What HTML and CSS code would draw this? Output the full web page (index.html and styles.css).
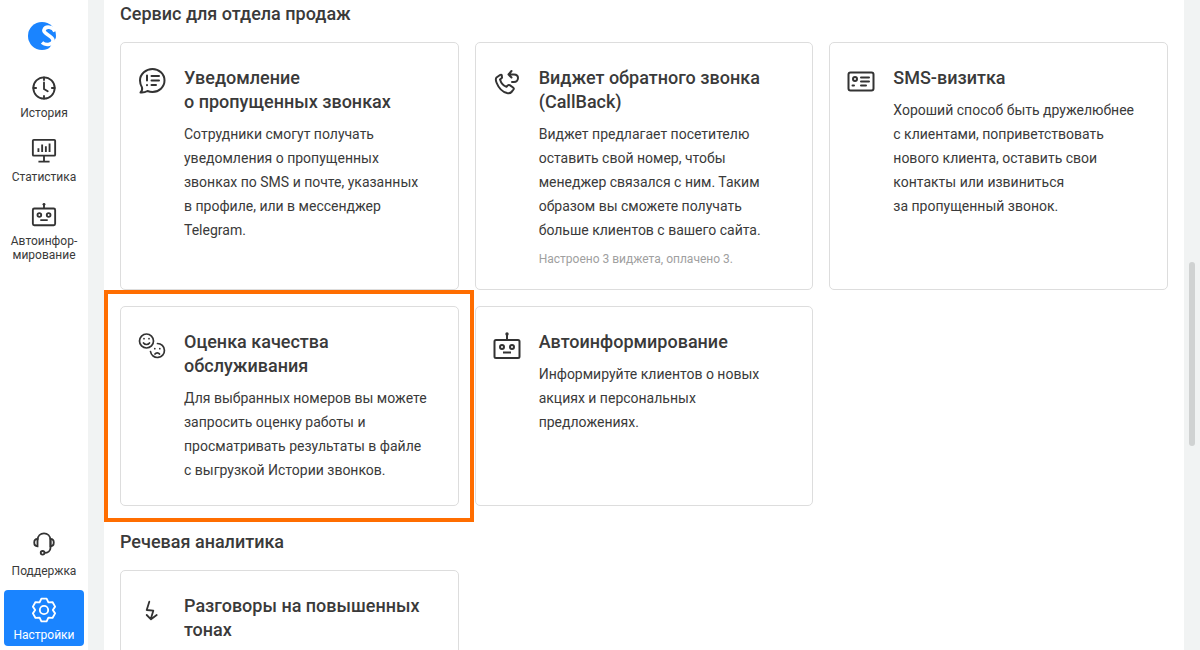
FILE: index.html
```html
<!DOCTYPE html>
<html lang="ru">
<head>
<meta charset="utf-8">
<title>Сервисы</title>
<link rel="stylesheet" href="styles.css">
</head>
<body>
<div class="app">
  <nav class="sidebar">
    <div class="nav-top">
      <svg class="logo" viewBox="0 0 28 28"><circle cx="14" cy="14" r="14" fill="#1a84ff"/><path d="M27 9.500C25 4.500 17.500 3.500 16 8c-1.200 4 8 5 9 10 .7 4.500-7 6-11 2.500" fill="none" stroke="#fff" stroke-width="3.600"/><path d="M28 16v12h-8z" fill="#fff"/></svg>
      <a class="nav-item nav-hist">
        <svg class="nav-icon" viewBox="0 0 28 28" fill="none" stroke="#333" stroke-width="2"><circle cx="14" cy="14" r="11.500"/><path d="M14 2.500v3M14 22.500v3M2.500 14h3M22.500 14h3M14 8v7l4 2.500" stroke-linecap="round"/></svg>
        <span>История</span>
      </a>
      <a class="nav-item nav-stat">
        <svg class="nav-icon" viewBox="0 0 28 28" fill="none" stroke="#333" stroke-width="2"><rect x="2" y="2" width="24" height="17" rx="1"/><path d="M14 19v6M8 25.500h12M8 15v-4M12 15V7M16 15v-6M20 15V6"/></svg>
        <span>Статистика</span>
      </a>
      <a class="nav-item nav-robot">
        <svg class="nav-icon" viewBox="0 0 28 28" fill="none" stroke="#333" stroke-width="2"><rect x="2" y="7" width="24" height="18" rx="1.500"/><path d="M14 7V3M10 19.500h8"/><circle cx="14" cy="2.500" r="1.500" fill="#333" stroke="none"/><circle cx="9" cy="14" r="2"/><circle cx="19" cy="14" r="2"/></svg>
        <span>Автоинфор-<br>мирование</span>
      </a>
    </div>
    <div class="nav-bottom">
      <a class="nav-item nav-support">
        <svg class="nav-icon" viewBox="0 0 28 28" fill="none" stroke="#333" stroke-width="2"><path d="M7 10c0-10 14-10 14 0v8c0 3.500-3 5.500-6.500 5.500"/><path d="M7 8.500C4.500 8.500 3.500 10 3.500 12.500s1 4 3.500 4zM21 8.500c2.500 0 3.500 1.500 3.500 4s-1 4-3.500 4z"/><circle cx="12.500" cy="23.500" r="2"/></svg>
        <span>Поддержка</span>
      </a>
      <a class="nav-item nav-active">
        <svg class="nav-icon" viewBox="0 0 28 28" fill="none" stroke="#fff" stroke-width="2" stroke-linejoin="round"><path d="M11.190 1.820h5.620l1.940 3.950 4.390-.29 2.810 4.870-2.450 3.650 2.450 3.650-2.810 4.870-4.390-.29-1.940 3.950h-5.620l-1.940-3.950-4.390.29-2.810-4.870L4.500 14 2.050 10.350l2.810-4.870 4.390.29z"/><circle cx="14" cy="14" r="4.500"/></svg>
        <span>Настройки</span>
      </a>
    </div>
  </nav>
  <main class="main">
    <h2 class="section-title">Сервис для отдела продаж</h2>
    <div class="grid">
      <article class="card card-tall">
        <svg class="card-icon" viewBox="0 0 28 28" fill="none" stroke="#333" stroke-width="2" stroke-linecap="round" stroke-linejoin="round"><path d="M14.500 2C21 2 26.500 7 26.500 13.500S21 25 14.500 25c-2 0-3.500-.4-5-1-2 1.200-4 1.800-7 1.500 1.500-1.500 2-3 1.500-5C2.800 18.500 2 16 2 13.500 2 7 8 2 14.500 2z"/><path d="M9 8.500v5M9 18v.2M13.500 9H21M13.500 13.500H21M13.500 18H18"/></svg>
        <div class="card-body">
          <h3 class="card-title">Уведомление<br>о пропущенных звонках</h3>
          <p class="card-text">Сотрудники смогут получать<br>уведомления о пропущенных<br>звонках по SMS и почте, указанных<br>в профиле, или в мессенджер<br>Telegram.</p>
        </div>
      </article>
      <article class="card card-tall">
        <svg class="card-icon" viewBox="0 0 28 28" fill="none" stroke="#333" stroke-width="2" stroke-linecap="round" stroke-linejoin="round"><path d="M7 8 3.500 10.500c-1 1-.8 3 .2 5.500 2 5 6 9 10.300 10 2 .4 3.500.2 4.500-1l2-2.500c.5-.8.300-1.500-.4-2l-3.400-2.300c-.7-.4-1.300-.4-1.900.2l-1.300 1.400c-3-1-5.500-4-6.500-7.300l1.500-1.300c.6-.5.700-1.100.3-1.800L8.800 8.200C8.400 7.500 7.700 7.500 7 8z"/><path d="M15.500 7.500h5.500c2.500 0 4 1.500 4 3.500s-1.500 4-4 4h-2M18.500 4l-3 3.500 3 3"/></svg>
        <div class="card-body">
          <h3 class="card-title">Виджет обратного звонка<br>(CallBack)</h3>
          <p class="card-text">Виджет предлагает посетителю<br>оставить свой номер, чтобы<br>менеджер связался с ним. Таким<br>образом вы сможете получать<br>больше клиентов с вашего сайта.</p>
          <p class="card-note">Настроено 3 виджета, оплачено 3.</p>
        </div>
      </article>
      <article class="card card-tall">
        <svg class="card-icon" viewBox="0 0 28 28" fill="none" stroke="#333" stroke-width="2" stroke-linecap="round" stroke-linejoin="round"><rect x="1.500" y="5.500" width="25" height="18" rx="2"/><circle cx="8" cy="12" r="2"/><path d="M14 10.500h8M14 14.500h8M5.500 18.500h1.500M14 18.500h5"/></svg>
        <div class="card-body">
          <h3 class="card-title">SMS-визитка</h3>
          <p class="card-text">Хороший способ быть дружелюбнее<br>с клиентами, поприветствовать<br>нового клиента, оставить свои<br>контакты или извиниться<br>за пропущенный звонок.</p>
        </div>
      </article>
      <article class="card card-short card-marked">
        <span class="marker"></span>
        <svg class="card-icon" viewBox="0 0 28 28" fill="none" stroke="#333" stroke-width="1.700" stroke-linecap="round"><circle cx="8.500" cy="10" r="7"/><path d="M5.500 12c1.500 2 4.500 2 6 0M6 7.500v.2M11 7.500v.2"/><path d="M19.500 12.500a7 7 0 1 1-7 8"/><path d="M17 23c1-1.600 3.500-1.600 4.500 0M16.800 17.500v.2M21.800 17.500v.2"/></svg>
        <div class="card-body">
          <h3 class="card-title">Оценка качества<br>обслуживания</h3>
          <p class="card-text">Для выбранных номеров вы можете<br>запросить оценку работы и<br>просматривать результаты в файле<br>с выгрузкой Истории звонков.</p>
        </div>
      </article>
      <article class="card card-short">
        <svg class="card-icon" viewBox="0 0 28 28" fill="none" stroke="#333" stroke-width="2"><rect x="1.500" y="9" width="25" height="18" rx="1.500"/><path d="M14 9V4M10 21.500h8"/><circle cx="14" cy="3" r="1.700" fill="#333" stroke="none"/><circle cx="9" cy="16" r="2"/><circle cx="19" cy="16" r="2"/></svg>
        <div class="card-body">
          <h3 class="card-title">Автоинформирование</h3>
          <p class="card-text">Информируйте клиентов о новых<br>акциях и персональных<br>предложениях.</p>
        </div>
      </article>
    </div>
    <h2 class="section-title section-next">Речевая аналитика</h2>
    <div class="grid">
      <article class="card card-short">
        <svg class="card-icon" viewBox="0 0 28 28" fill="none" stroke="#333" stroke-width="1.800" stroke-linecap="round" stroke-linejoin="round"><path d="M11.300 6.700 8.700 15l6.600.7L13 23.300M8.700 20l4.300 4.300 5.700-4.300"/></svg>
        <div class="card-body">
          <h3 class="card-title">Разговоры на повышенных<br>тонах</h3>
        </div>
      </article>
    </div>
  </main>
  <div class="scrollbar"><span class="thumb"></span></div>
</div>
</body>
</html>
```
FILE: styles.css
```css
* { box-sizing: border-box; }
html, body { margin: 0; height: 100%; overflow: hidden; }
body { font-family: Roboto, "Liberation Sans", sans-serif; color: #333; background: #f1f3f3; }
.app { display: flex; height: 650px; }
.sidebar { width: 88px; flex: none; background: #fff; display: flex; flex-direction: column; justify-content: space-between; padding: 22px 4px 4px; margin-right: 16px; }
.nav-top, .nav-bottom { display: flex; flex-direction: column; align-items: center; }
.logo { width: 28px; height: 28px; display: block; margin: 0 5px 25px 0; }
.nav-item { display: flex; flex-direction: column; align-items: center; width: 80px; font-size: 12px; line-height: 14px; text-align: center; color: #3a3a3a; }
.nav-icon { width: 26px; height: 26px; display: block; flex: none; }
.nav-hist span { margin-top: 5px; }
.nav-stat { margin-top: 18px; }
.nav-stat span { margin-top: 6px; }
.nav-robot { margin-top: 18px; }
.nav-robot span { margin-top: 6px; }
.nav-support span { margin-top: 7px; }
.nav-support { margin-bottom: 12px; }
.nav-active { background: #1a84ff; color: #fff; border-radius: 4px; height: 56px; padding-top: 7px; }
.nav-active span { margin-top: 5px; }
.main { width: 1080px; flex: none; background: #fff; padding: 2px 16px 0; height: 650px; overflow: hidden; }
.section-title { margin: 0 0 16px; font-size: 18px; line-height: 24px; font-weight: 500; color: #3a3a3a; }
.section-next { margin-top: 24px; }
.grid { display: grid; grid-template-columns: repeat(3, 338.67px); column-gap: 16px; row-gap: 16px; }
.card { position: relative; display: flex; background: #fff; border: 1px solid #ddd; border-radius: 5px; padding: 23px 18px 0 17px; }
.card-tall { height: 248px; }
.card-short { height: 200px; }
.card-icon { width: 28px; height: 28px; flex: none; margin-top: 1px; margin-right: 18px; }
.card-title { margin: 0 0 8px; font-size: 18px; line-height: 24px; font-weight: 500; color: #3a3a3a; }
.card-text { margin: 0; font-size: 14px; line-height: 24px; color: #3a3a3a; white-space: nowrap; }
.card-note { margin: 5px 0 0; font-size: 12px; line-height: 24px; color: #a0a0a0; }
.marker { position: absolute; inset: -17px -16px -17px -17px; border: 4px solid #ff6d00; pointer-events: none; }
.scrollbar { flex: 1; position: relative; }
.thumb { position: absolute; left: 5px; top: 262px; width: 6px; height: 184px; border-radius: 3px; background: #d0d2d2; }
```
